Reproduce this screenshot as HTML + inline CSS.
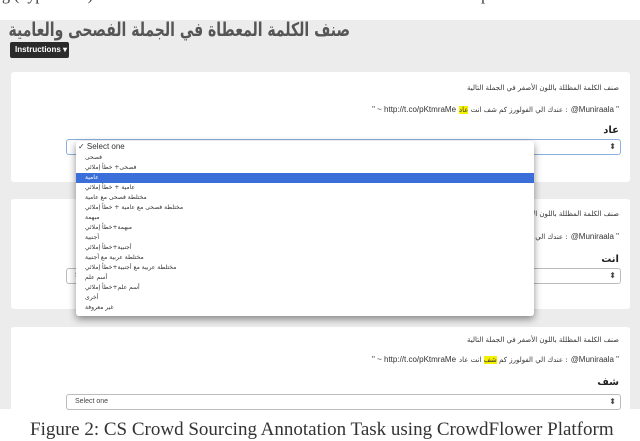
<!DOCTYPE html>
<html><head><meta charset="utf-8"><style>
*{margin:0;padding:0;box-sizing:border-box}
body{width:640px;height:429px;background:#fff;position:relative;overflow:hidden;font-family:"Liberation Sans","Noto Sans CJK SC",sans-serif}
.bg{position:absolute;left:0;top:20px;width:640px;height:389px;background:#ececec}
.top{position:absolute;left:2px;top:-13px;font-family:"Liberation Serif",serif;font-size:16px;color:#333;white-space:nowrap}
.title{position:absolute;left:10px;top:20px;font-size:14px;font-weight:bold;color:#555;direction:rtl;width:340px;text-align:right;font-family:"DejaVu Sans",sans-serif;white-space:nowrap;transform:scaleY(1.35);transform-origin:top}
.btn{position:absolute;left:10px;top:42px;width:59px;height:16px;background:#2b2b2b;border-radius:2px;color:#fff;font-size:8px;font-weight:bold;line-height:16px;padding-left:5px}
.card{position:absolute;left:11px;width:619px;background:#fff;border-radius:3px}
.h{position:absolute;right:11px;font-size:7px;color:#333;direction:rtl;white-space:nowrap;font-family:"DejaVu Sans",sans-serif}
.tw{position:absolute;right:11px;width:400px;height:12px;font-size:8px;color:#333;white-space:nowrap;line-height:12px}
.tw span.p{float:right;margin-left:3px}
.tw .ar{font-family:"DejaVu Sans",sans-serif;font-size:7px;direction:rtl;unicode-bidi:isolate}
.tw .l{direction:ltr;unicode-bidi:isolate}
.hl{background:#f5f000}
.lab{position:absolute;right:11px;font-size:10px;color:#222;font-weight:bold;font-family:"DejaVu Sans",sans-serif}
.sel{position:absolute;left:55px;width:555px;height:16px;border:1px solid #bbb;border-radius:3px;font-size:7px;color:#444;padding-left:8px;line-height:14px;background:#fff}
.sel:after{content:"⬍";position:absolute;right:4px;top:0;font-size:8px}
.dd{position:absolute;left:76px;top:141px;width:458px;height:175px;background:#fff;box-shadow:0 3px 8px rgba(0,0,0,.45);border-radius:3px;font-size:7px;color:#333}
.dd div{height:10px;line-height:10px;padding-left:9px;font-family:"DejaVu Sans",sans-serif;font-size:6px}
.dd .f{font-family:"Liberation Sans",sans-serif;font-size:8px;padding-left:2px;height:12px;line-height:12px}
.dd .a{background:#3b6ed8;color:#fff}
.cap{position:absolute;left:30px;top:419px;font-family:"Liberation Serif",serif;font-size:19px;color:#333;white-space:nowrap}
</style></head><body>
<div class="top">g (hypothesis) ... ... ... ... ... ... ... ... ... ... ... ... ... ... ... ... ... ... ... ... ... ... ... ... p</div>
<div class="bg"></div>
<div class="title">صنف الكلمة المعطاة في الجملة الفصحى والعامية</div>
<div class="btn">Instructions ▾</div>

<div class="card" style="top:72px;height:110px">
 <div class="h" style="top:12px">صنف الكلمة المظللة باللون الأصفر في الجملة التالية</div>
 <div class="tw" style="top:32px"><span class="p l">@Muniraala "</span><span class="p ar">: عندك الي الفولورز كم شف انت <span class="hl">عاد</span></span><span class="p l">" ~ http://t.co/pKtmraMe</span></div>
 <div class="lab" style="top:53px">عاد</div>
 <div class="sel" style="top:67px;border-color:#8ab0e0"></div>
</div>
<div class="card" style="top:199px;height:110px">
 <div class="h" style="top:11px">صنف الكلمة المظللة باللون الأصفر في الجملة التالية</div>
 <div class="tw" style="top:32px"><span class="p l">@Muniraala "</span><span class="p ar">: عندك الي الفولورز كم شف <span class="hl">انت</span> عاد</span><span class="p l">" ~ http://t.co/pKtmraMe</span></div>
 <div class="lab" style="top:55px">انت</div>
 <div class="sel" style="top:69px">Select one</div>
</div>
<div class="card" style="top:327px;height:90px">
 <div class="h" style="top:9px">صنف الكلمة المظللة باللون الأصفر في الجملة التالية</div>
 <div class="tw" style="top:27px"><span class="p l">@Muniraala "</span><span class="p ar">: عندك الي الفولورز كم <span class="hl">شف</span> انت عاد</span><span class="p l">" ~ http://t.co/pKtmraMe</span></div>
 <div class="lab" style="top:50px">شف</div>
 <div class="sel" style="top:67px">Select one</div>
</div>

<div class="dd">
 <div class="f">✓ Select one</div>
 <div>فصحى</div>
 <div>فصحى+ خطأ إملائي</div>
 <div class="a">عامية</div>
 <div>عامية + خطأ إملائي</div>
 <div>مختلطة فصحى مع عامية</div>
 <div>مختلطة فصحى مع عامية + خطأ إملائي</div>
 <div>مبهمة</div>
 <div>مبهمة+خطأ إملائي</div>
 <div>أجنبية</div>
 <div>أجنبية+خطأ إملائي</div>
 <div>مختلطة عربية مع أجنبية</div>
 <div>مختلطة عربية مع أجنبية+خطأ إملائي</div>
 <div>أسم علم</div>
 <div>أسم علم+خطأ إملائي</div>
 <div>أخرى</div>
 <div>غير معروفة</div>
</div>
<div class="cap">Figure 2: CS Crowd Sourcing Annotation Task using CrowdFlower Platform</div>
</body></html>
